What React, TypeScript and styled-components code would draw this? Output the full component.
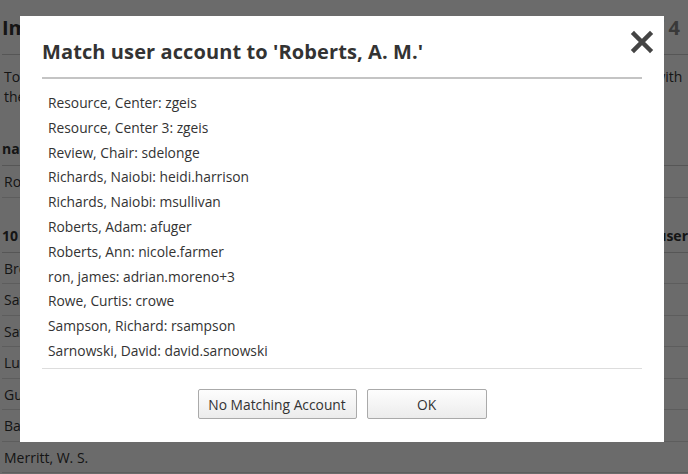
import React from "react";
import styled, { createGlobalStyle } from "styled-components";

const Global = createGlobalStyle`
  html, body { margin: 0; padding: 0; background: #fff; overflow: hidden; }
  body { font-family: "Open Sans", "Liberation Sans", sans-serif; color: #333; }
`;

const Page = styled.div`
  width: 688px; height: 474px; position: relative; overflow: hidden;
`;
const Back = styled.div`
  padding: 0 0 0 2px; font-size: 14px;
`;
const TitleBar = styled.div`
  display: flex; justify-content: space-between; align-items: center;
  height: 54px; border-bottom: 1px solid #ccc; padding: 0 8px 0 0;
  font-size: 20px; font-weight: 700;
`;
const Pager = styled.span` color: #888; `;
const Intro = styled.p`
  margin: 12px 0 0; line-height: 20px; padding-left: 2px;
`;
const Head = styled.div`
  display: flex; justify-content: space-between; font-weight: 700;
  margin-top: 26px; height: 32px; line-height: 32px; border-bottom: 1px solid #ccc;
`;
const Row = styled.div`
  height: 31.5px; line-height: 31.5px; border-bottom: 1px solid #ddd; padding-left: 2px;
  box-sizing: border-box;
`;
const Section = styled.div` margin-top: 21px; display: flex; justify-content: space-between; font-weight: 700; height: 33px; line-height: 33px; border-bottom: 1px solid #ccc;`;
const Overlay = styled.div`
  position: absolute; inset: 0; background: rgba(0,0,0,0.58);
`;
const Modal = styled.div`
  position: absolute; left: 20px; top: 16px; width: 644px; height: 426px;
  background: #fff; box-sizing: border-box; padding: 18px 22px 0;
  display: flex; flex-direction: column;
`;
const MHead = styled.div`
  display: flex; justify-content: space-between; align-items: flex-start;
  border-bottom: 2px solid #c4c4c4; height: 45px; box-sizing: border-box;
`;
const MTitle = styled.h2`
  margin: 0; padding-top: 4px; font-size: 20px; line-height: 27px; font-weight: 700; color: #333; letter-spacing: 0.1px;
`;
const Close = styled.button`
  border: 0; background: none; padding: 0; margin: -4px -12px 0 0; cursor: pointer;
  width: 24px; height: 24px; display: flex;
`;
const List = styled.ul`
  list-style: none; margin: 0; padding: 12px 0 0 6px; height: 290px;
  border-bottom: 1px solid #ddd; box-sizing: border-box;
`;
const Item = styled.li`
  font-size: 13.8px; line-height: 24.8px; color: #333;
`;
const Buttons = styled.div`
  display: flex; justify-content: center; gap: 10px; padding-top: 20px;
`;
const Btn = styled.button<{ $w: number }>`
  width: ${p => p.$w}px; height: 30px; border: 1px solid #aaa; border-radius: 2px;
  background: linear-gradient(#fdfdfd, #ececec); font-family: inherit; font-size: 13.8px; color: #333;
`;

const items = [
  "Resource, Center: zgeis", "Resource, Center 3: zgeis", "Review, Chair: sdelonge",
  "Richards, Naiobi: heidi.harrison", "Richards, Naiobi: msullivan", "Roberts, Adam: afuger",
  "Roberts, Ann: nicole.farmer", "ron, james: adrian.moreno+3", "Rowe, Curtis: crowe",
  "Sampson, Richard: rsampson", "Sarnowski, David: david.sarnowski",
];
const rows = ["Brokes, A.", "Sawyer, J.", "Sawyer, T.", "Lu, B.", "Guillard, P.", "Baker, J.", "Merritt, W. S."];

export default function App() {
  return (
    <Page>
      <Global />
      <Back>
        <TitleBar><span>Import Users</span><Pager>1 of 4</Pager></TitleBar>
        <Intro>To match imported names to existing accounts, select each name and choose the account to match with<br />the matching user account.</Intro>
        <Head><span>name</span></Head>
        <Row>Roberts, A. M.</Row>
        <Section><span>10 names</span><span>user</span></Section>
        {rows.map(r => <Row key={r}>{r}</Row>)}
      </Back>
      <Overlay />
      <Modal>
        <MHead>
          <MTitle>Match user account to 'Roberts, A. M.'</MTitle>
          <Close aria-label="Close">
            <svg width="24" height="24" viewBox="0 0 24 24">
              <path d="M4 4 L20 20 M20 4 L4 20" stroke="#444" strokeWidth="4.5" strokeLinecap="square" />
            </svg>
          </Close>
        </MHead>
        <List>{items.map(i => <Item key={i}>{i}</Item>)}</List>
        <Buttons>
          <Btn $w={159}>No Matching Account</Btn>
          <Btn $w={120}>OK</Btn>
        </Buttons>
      </Modal>
    </Page>
  );
}
